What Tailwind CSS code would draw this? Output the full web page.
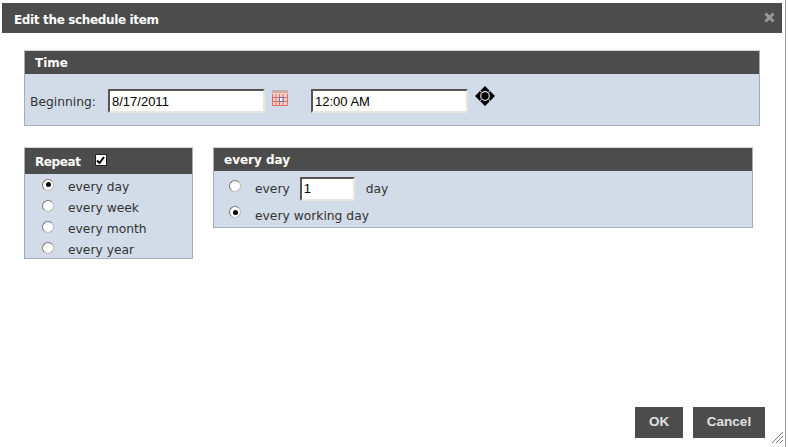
<!DOCTYPE html>
<html lang="en">
  <head>
    <meta charset="UTF-8" />
    <title>Edit the schedule item</title>
    <script src="https://cdn.jsdelivr.net/npm/@tailwindcss/browser@4"></script>
  </head>
  <body class="bg-white overflow-hidden">
    <div class="relative w-[788px] h-[447px] pt-[3px] pl-[2px] font-['DejaVu_Sans',sans-serif] text-[12.3px] text-[#333]">
      <!-- right edge of the dialog -->
      <div class="absolute left-[785px] top-0 w-[1px] h-[447px] bg-[#9a9a9a]"></div>

      <!-- Title bar -->
      <div class="w-[780px] h-[30px] bg-[#4c4c4c] flex items-center justify-between pl-[12px] pr-[7px]">
        <h1 class="font-bold text-[12px] tracking-[-0.35px] text-white pt-[4px]">Edit the schedule item</h1>
        <svg class="-mt-[1px]" width="11" height="11" viewBox="0 0 11 11"><path d="M1.5 1.5L9.5 9.5M9.5 1.5L1.5 9.5" stroke="#999" stroke-width="3" /></svg>
      </div>

      <!-- Time -->
      <section class="ml-[22px] mt-[17px] w-[736px] h-[76px] border border-[#a3adbd] border-t-[#cfd6e1] bg-[#d2dce9]">
        <div class="h-[23px] bg-[#4c4c4c] pl-[10px] flex items-center font-bold text-[12px] text-white">Time</div>
        <div class="flex items-start pl-[5px] pt-[15px]">
          <span class="w-[78px] leading-[24px] pt-[1px]">Beginning:</span>
          <input value="8/17/2011" class="w-[157px] h-[24px] bg-white border-2 border-[#e8e6dc] border-t-[#555] border-l-[#555] pl-[2px] text-[13px] font-['Liberation_Sans',sans-serif] text-black" />
          <svg class="ml-[7px] mt-[1px]" width="16" height="16" viewBox="0 0 16 16">
            <rect x="0.5" y="0.5" width="15" height="15" fill="#f9cfc6" />
            <path d="M0.5 1.5H15.5" stroke="#a88a80" stroke-width="3" stroke-dasharray="1 1" />
            <path d="M0.5 4V15.5H15.5V4M4 4V15.5M7.5 4V15.5M11 4V15.5M0.5 7.5H15.5M0.5 11.5H15.5" stroke="#dc6f66" fill="none" />
            <rect x="7.5" y="7.5" width="3.5" height="4" fill="#fff" stroke="#5a70c0" />
          </svg>
          <input value="12:00 AM" class="ml-[23px] w-[157px] h-[24px] bg-white border-2 border-[#e8e6dc] border-t-[#555] border-l-[#555] pl-[2px] text-[13px] font-['Liberation_Sans',sans-serif] text-black" />
          <svg class="ml-[7px] -mt-[3px]" width="20" height="20" viewBox="0 0 20 20">
            <path d="M10 0L15 5H5ZM10 20L15 15H5ZM0 10L5 5V15ZM20 10L15 5V15Z" fill="#000" />
            <circle cx="10" cy="10" r="6" fill="#000" />
            <circle cx="10" cy="10" r="4.3" fill="none" stroke="#d8d8d8" stroke-width="1.2" />
          </svg>
        </div>
      </section>

      <div class="flex items-start ml-[22px] mt-[21px]">
        <!-- Repeat -->
        <section class="w-[169px] h-[112px] border border-[#a3adbd] border-t-[#cfd6e1] bg-[#d2dce9]">
          <div class="h-[26px] bg-[#4c4c4c] pl-[10px] pt-[1px] flex items-center gap-[14px] font-bold text-[12px] tracking-[-0.4px] text-white">
            Repeat
            <span class="w-[12px] h-[12px] bg-white border border-[#222] flex items-center justify-center -mt-[3px]">
              <svg width="9" height="9" viewBox="0 0 9 9"><path d="M1 4.5L3.5 7L8 1" stroke="#000" stroke-width="2" fill="none" /></svg>
            </span>
          </div>
          <ul class="pt-[3px]">
            <li class="h-[21px] flex items-center gap-[14px] pl-[17px]">
              <span class="w-[12px] h-[12px] -mt-[6px] rounded-full bg-white border border-[#bbb] border-t-[#777] border-l-[#777] flex items-center justify-center"><span class="w-[5px] h-[5px] rounded-full bg-black"></span></span>
              every day
            </li>
            <li class="h-[21px] flex items-center gap-[14px] pl-[17px]">
              <span class="w-[12px] h-[12px] -mt-[6px] rounded-full bg-white border border-[#bbb] border-t-[#777] border-l-[#777]"></span>
              every week
            </li>
            <li class="h-[21px] flex items-center gap-[14px] pl-[17px]">
              <span class="w-[12px] h-[12px] -mt-[6px] rounded-full bg-white border border-[#bbb] border-t-[#777] border-l-[#777]"></span>
              every month
            </li>
            <li class="h-[21px] flex items-center gap-[14px] pl-[17px]">
              <span class="w-[12px] h-[12px] -mt-[6px] rounded-full bg-white border border-[#bbb] border-t-[#777] border-l-[#777]"></span>
              every year
            </li>
          </ul>
        </section>

        <!-- every day -->
        <section class="ml-[20px] w-[540px] h-[81px] border border-[#a3adbd] border-t-[#cfd6e1] bg-[#d2dce9]">
          <div class="h-[23px] bg-[#4c4c4c] pl-[10px] flex items-center font-bold text-[12px] text-white">every day</div>
          <div class="h-[31px] flex items-center pl-[15px] pt-[4px]">
            <span class="w-[12px] h-[12px] -mt-[6px] rounded-full bg-white border border-[#bbb] border-t-[#777] border-l-[#777]"></span>
            <span class="ml-[14px] mt-[2px]">every</span>
            <input value="1" class="ml-[10px] w-[55px] h-[24px] bg-white border-2 border-[#e8e6dc] border-t-[#555] border-l-[#555] pl-[2px] text-[13px] font-['Liberation_Sans',sans-serif] text-black" />
            <span class="ml-[11px] mt-[2px]">day</span>
          </div>
          <div class="h-[24px] flex items-center pl-[15px] pt-[2px]">
            <span class="w-[12px] h-[12px] -mt-[6px] rounded-full bg-white border border-[#bbb] border-t-[#777] border-l-[#777] flex items-center justify-center"><span class="w-[5px] h-[5px] rounded-full bg-black"></span></span>
            <span class="ml-[14px] mt-[2px]">every working day</span>
          </div>
        </section>
      </div>

      <!-- Buttons -->
      <div class="absolute left-[635px] top-[407px] flex gap-[10px] font-['Liberation_Sans',sans-serif]">
        <button class="w-[48px] h-[31px] bg-[#4c4c4c] font-bold text-[13.5px] text-[#e0e0e0]">OK</button>
        <button class="w-[72px] h-[31px] bg-[#4c4c4c] font-bold text-[13.5px] text-[#e0e0e0]">Cancel</button>
      </div>

      <!-- Resize grip -->
      <svg class="absolute left-[771px] top-[431px]" width="13" height="13" viewBox="0 0 13 13">
        <path d="M12 1L1 12M12 5L5 12M12 9L9 12" stroke="#777" fill="none" />
      </svg>
    </div>
  </body>
</html>
